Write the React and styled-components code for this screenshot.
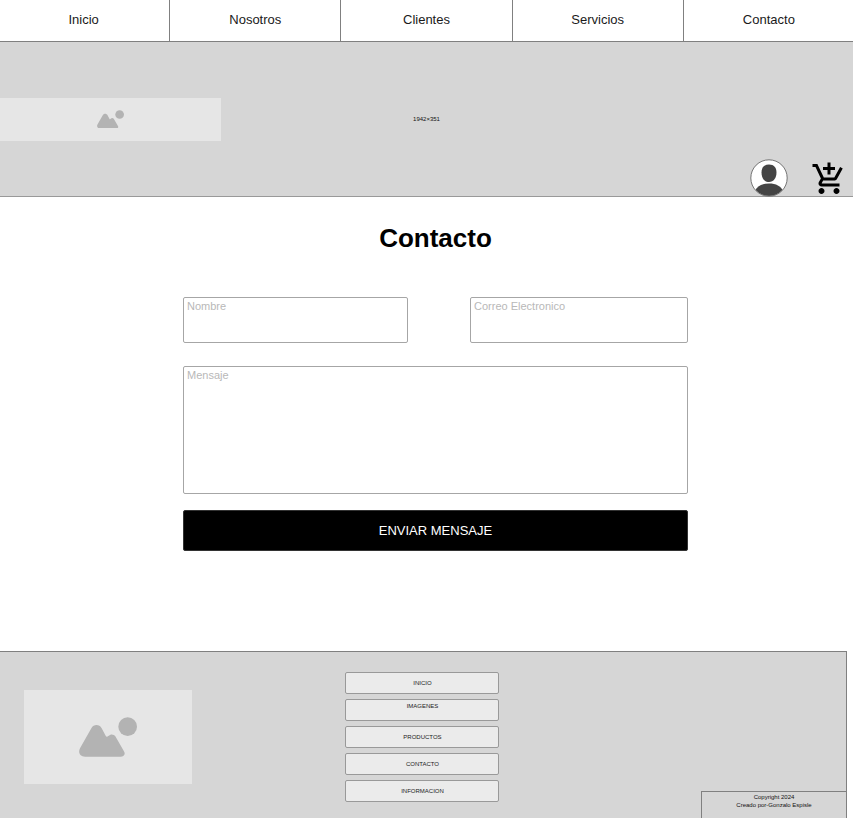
import React from "react";
import styled, { createGlobalStyle } from "styled-components";
import { MdAddShoppingCart } from "react-icons/md";

const GlobalStyle = createGlobalStyle`
  *, *::before, *::after { box-sizing: border-box; }
  body {
    margin: 0;
    background: #fff;
    color: #111;
    font-family: "Liberation Sans", Arial, sans-serif;
    overflow-x: hidden;
  }
`;

const Page = styled.div`
  display: flex;
  flex-direction: column;
  min-height: 100vh;
`;

const TopNav = styled.nav`
  display: grid;
  grid-template-columns: repeat(5, 1fr);
  margin: 0 -1px 0 -2px;
  border-bottom: 1px solid #808080;
`;

const TopLink = styled.a`
  padding: 10px 0 11px;
  font-size: 13px;
  line-height: 20px;
  text-align: center;
  text-decoration: none;
  color: #1a1a1a;

  & + & {
    border-left: 1px solid #808080;
  }
`;

const Banner = styled.header`
  display: grid;
  grid-template-columns: 1fr auto 1fr;
  align-items: center;
  min-height: 155px;
  background: #d6d6d6;
  border-bottom: 1px solid #999;
`;

const Placeholder = styled.div`
  display: flex;
  align-items: center;
  justify-content: center;
  width: ${(p) => p.$width};
  height: ${(p) => p.$height};
  background: #e6e6e6;

  svg {
    display: block;
    width: ${(p) => p.$icon};
    fill: #b3b3b3;
  }
`;

const BannerSize = styled.span`
  font-size: 6px;
  line-height: 8px;
`;

const Actions = styled.div`
  display: flex;
  align-self: end;
  align-items: flex-end;
  justify-self: end;
  gap: 23px;
  margin-bottom: -1px;
  padding-right: 6px;
`;

const IconButton = styled.button`
  display: block;
  padding: 0;
  border: 0;
  background: none;
  color: #000;
  cursor: pointer;

  svg {
    display: block;
  }
`;

const Main = styled.main`
  flex: 1;
  padding: 25px 0 100px 18px;
`;

const Title = styled.h1`
  margin: 0 0 43px;
  font-size: 26px;
  line-height: 32px;
  text-align: center;
  color: #000;
`;

const Form = styled.form`
  display: grid;
  grid-template-columns: 225fr 218fr;
  column-gap: 62px;
  width: 100%;
  max-width: 505px;
  margin: 0 auto;
`;

const Field = styled.input`
  width: 100%;
  height: 46px;
  margin: 0 0 23px;
  padding: 1px 3px 29px;
  border: 1px solid #a6a6a6;
  border-radius: 2px;
  background: #fff;
  font: 11px/14px "Liberation Sans", Arial, sans-serif;
  color: #111;

  &::placeholder {
    color: #b8b8b8;
    opacity: 1;
  }
`;

const MessageField = styled(Field)`
  display: block;
  grid-column: 1 / -1;
  height: 128px;
  margin: 0 0 16px;
  resize: none;
`;

const SubmitButton = styled.button`
  grid-column: 1 / -1;
  height: 41px;
  padding: 0;
  border: 1px solid #333;
  border-radius: 2px;
  background: #000;
  color: #fff;
  font: 13px/20px "Liberation Sans", Arial, sans-serif;
  cursor: pointer;
`;

const Footer = styled.footer`
  display: grid;
  grid-template-columns: 345fr 154px 346fr;
  margin-right: 6px;
  background: #d6d6d6;
  border-top: 1px solid #808080;
  border-right: 1px solid #808080;
`;

const FooterLogo = styled.div`
  padding: 38px 0 0 24px;
`;

const FooterNav = styled.nav`
  display: grid;
  gap: 5px;
  padding: 20px 0 17px;
`;

const FooterLink = styled.a`
  display: flex;
  align-items: ${(p) => (p.$raised ? "flex-start" : "center")};
  justify-content: center;
  height: 22px;
  padding-top: ${(p) => (p.$raised ? "2px" : "0")};
  border: 1px solid #999;
  border-radius: 2px;
  background: #ebebeb;
  font-size: 6px;
  line-height: 8px;
  text-decoration: none;
  color: #222;
`;

const Copyright = styled.p`
  align-self: end;
  justify-self: end;
  width: 145px;
  height: 28px;
  margin: 0;
  padding-top: 1px;
  border-top: 1px solid #808080;
  border-left: 1px solid #808080;
  font-size: 6px;
  line-height: 8px;
  text-align: center;
`;

const PictureIcon = () => (
  <svg viewBox="0 0 174 119" aria-hidden="true">
    <circle cx="146" cy="29" r="28" />
    <path d="M37 34C44 21 61 21 68 34L80 56Q83 62 88 57C95 50 104 51 109 58L134 101C141 111 135 119 125 119H18C4 119-4 108 3 94Z" />
  </svg>
);

const AvatarIcon = () => (
  <svg width="38" height="38" viewBox="0 0 38 38" aria-hidden="true">
    <defs>
      <clipPath id="avatar-disc">
        <circle cx="19" cy="19" r="18" />
      </clipPath>
    </defs>
    <circle cx="19" cy="19" r="18" fill="#fff" />
    <g fill="#444" clipPath="url(#avatar-disc)">
      <path d="M19 5.5C24 5.5 26.5 8.5 26.5 13.5C26.5 19 23.5 23 19 23S11.500 19 11.500 13.500C11.500 8.500 14 5.500 19 5.500Z" />
      <path d="M5 38V32C7 27 12 24.500 19 24.500S31 27 33 32V38Z" />
    </g>
    <circle cx="19" cy="19" r="18.200" fill="none" stroke="#777" />
  </svg>
);

const sections = ["Inicio", "Nosotros", "Clientes", "Servicios", "Contacto"];

const footerLinks = [
  { label: "INICIO" },
  { label: "IMAGENES", raised: true },
  { label: "PRODUCTOS" },
  { label: "CONTACTO" },
  { label: "INFORMACION" },
];

export default function App() {
  return (
    <Page>
      <GlobalStyle />
      <TopNav>
        {sections.map((name) => (
          <TopLink key={name} href={`#${name.toLowerCase()}`}>
            {name}
          </TopLink>
        ))}
      </TopNav>
      <Banner>
        <Placeholder $width="53.5%" $height="43px" $icon="27px">
          <PictureIcon />
        </Placeholder>
        <BannerSize>1942×351</BannerSize>
        <Actions>
          <IconButton type="button" aria-label="Cuenta">
            <AvatarIcon />
          </IconButton>
          <IconButton type="button" aria-label="Carrito">
            <MdAddShoppingCart size={36} />
          </IconButton>
        </Actions>
      </Banner>
      <Main>
        <Title>Contacto</Title>
        <Form onSubmit={(event) => event.preventDefault()}>
          <Field type="text" aria-label="Nombre" placeholder="Nombre" />
          <Field
            type="email"
            aria-label="Correo Electronico"
            placeholder="Correo Electronico"
          />
          <MessageField
            as="textarea"
            aria-label="Mensaje"
            placeholder="Mensaje"
          />
          <SubmitButton type="submit">ENVIAR MENSAJE</SubmitButton>
        </Form>
      </Main>
      <Footer>
        <FooterLogo>
          <Placeholder $width="168px" $height="94px" $icon="58px">
            <PictureIcon />
          </Placeholder>
        </FooterLogo>
        <FooterNav>
          {footerLinks.map(({ label, raised }) => (
            <FooterLink
              key={label}
              href={`#${label.toLowerCase()}`}
              $raised={raised}
            >
              {label}
            </FooterLink>
          ))}
        </FooterNav>
        <Copyright>
          Copyright 2024
          <br />
          Creado por-Gonzalo Espisle
        </Copyright>
      </Footer>
    </Page>
  );
}
